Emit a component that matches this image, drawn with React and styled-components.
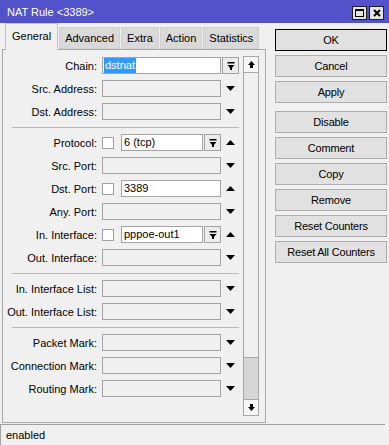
import React from 'react';
import styled, { createGlobalStyle } from 'styled-components';

const GlobalStyle = createGlobalStyle`
	html, body {
		margin: 0;
		padding: 0;
		background: #f0f0f0;
	}
	body {
		font-family: "Liberation Sans", Arial, sans-serif;
		font-size: 11px;
		color: #000;
	}
`;

const Window = styled.div`
	width: 389px;
	height: 445px;
	display: flex;
	flex-direction: column;
	background: #f0f0f0;
	overflow: hidden;
`;

const TitleBar = styled.div`
	height: 23px;
	flex: none;
	display: flex;
	align-items: center;
	justify-content: space-between;
	padding: 0 5px 0 7px;
	background: #5252cb;
	color: #fff;
	font-size: 11px;
	box-sizing: border-box;
`;

const TitleButtons = styled.div`
	display: flex;
	gap: 2px;
	margin-top: 2px;
`;

const TitleButton = styled.div`
	width: 15px;
	height: 14px;
	box-sizing: border-box;
	border: 1px solid #1e1e1e;
	background: #e4e4e4;
	display: flex;
	align-items: center;
	justify-content: center;
`;

const Body = styled.div`
	display: flex;
	flex: none;
	height: 400px;
`;

const LeftPane = styled.div`
	width: 266px;
	padding-left: 2px;
	box-sizing: border-box;
	display: flex;
	flex-direction: column;
`;

const TabStrip = styled.div`
	height: 26px;
	display: flex;
	align-items: flex-end;
	padding-left: 3px;
`;

const Tab = styled.div`
	position: relative;
	z-index: ${({ $active }) => ($active ? 1 : 0)};
	box-sizing: border-box;
	height: ${({ $active }) => ($active ? '27px' : '22px')};
	margin-bottom: ${({ $active }) => ($active ? '-1px' : '0')};
	margin-left: ${({ $active }) => ($active ? '0' : '1px')};
	padding: ${({ $active }) => ($active ? '0 6px 3px' : '0 5px')};
	display: flex;
	align-items: center;
	background: ${({ $active }) => ($active ? '#f0f0f0' : '#d9d9d9')};
	border: 1px solid ${({ $active }) => ($active ? '#c4c4c4' : '#d0d0d0')};
	border-bottom: ${({ $active }) => ($active ? 'none' : '1px solid #d0d0d0')};
	white-space: nowrap;
`;

const Panel = styled.div`
	width: 264px;
	height: 374px;
	box-sizing: border-box;
	border: 1px solid #a8a8a8;
	display: flex;
`;

const Rows = styled.div`
	width: 236px;
	padding-top: 4px;
	display: flex;
	flex-direction: column;
`;

const Section = styled.div`
	display: flex;
	flex-direction: column;
`;

const Divider = styled.div`
	height: 1px;
	width: 227px;
	margin: 4px 0 3px 9px;
	background: #b9b9b9;
`;

const Row = styled.div`
	height: 23px;
	display: flex;
	align-items: center;
`;

const Label = styled.div`
	width: 94px;
	margin-right: 5px;
	text-align: right;
	white-space: nowrap;
`;

const Controls = styled.div`
	width: 119px;
	display: flex;
	align-items: center;
`;

const CheckBox = styled.div`
	width: 12px;
	height: 12px;
	flex: none;
	box-sizing: border-box;
	border: 1px solid #a0a0a0;
	background: #fff;
	margin-right: 7px;
`;

const Field = styled.div`
	flex: 1;
	height: 17px;
	box-sizing: border-box;
	border: 1px solid #a3a3a3;
	background: ${({ $filled }) => ($filled ? '#fff' : '#f0f0f0')};
	padding: 0 2px;
	line-height: 15px;
	white-space: nowrap;
	overflow: hidden;
`;

const Selected = styled.span`
	display: inline-block;
	background: #3399ff;
	color: #fff;
	padding: 0 1px;
	margin-left: -1px;
	height: 15px;
`;

const DropButton = styled.div`
	width: 17px;
	height: 17px;
	flex: none;
	margin-left: 1px;
	box-sizing: border-box;
	border: 1px solid #a3a3a3;
	background: #ececec;
	display: flex;
	align-items: center;
	justify-content: center;
`;

const Slot = styled.div`
	width: 18px;
	height: 17px;
	display: flex;
	align-items: center;
	justify-content: center;
`;

const ScrollBar = styled.div`
	width: 16px;
	margin: 6px 0 6px 4px;
	box-sizing: border-box;
	border: 1px solid #a8a8a8;
	display: flex;
	flex-direction: column;
	background: #f0f0f0;
`;

const ScrollButton = styled.div`
	height: 15px;
	flex: none;
	display: flex;
	align-items: center;
	justify-content: center;
	border-${({ $edge }) => $edge}: 1px solid #a8a8a8;
	background: #f7f7f7;
`;

const Track = styled.div`
	flex: 1;
	display: flex;
	flex-direction: column;
	justify-content: flex-end;
`;

const Thumb = styled.div`
	height: 41px;
	background: #d6d6d6;
	border-top: 1px solid #a8a8a8;
`;

const ButtonColumn = styled.div`
	width: 112px;
	margin-left: 9px;
	padding-top: 6px;
	display: flex;
	flex-direction: column;
`;

const Button = styled.div`
	height: 22px;
	box-sizing: border-box;
	margin-top: ${({ $gap }) => $gap}px;
	border: 1px solid ${({ $primary }) => ($primary ? '#000' : '#adadad')};
	background: #e1e1e1;
	display: flex;
	align-items: center;
	justify-content: center;
	letter-spacing: -0.2px;
	white-space: nowrap;
`;

const StatusBar = styled.div`
	margin: 1px 4px 0 0;
	height: 21px;
	box-sizing: border-box;
	border-top: 1px solid #a0a0a0;
	border-left: 1px solid #a0a0a0;
	display: flex;
	align-items: center;
	padding-left: 5px;
`;

const DownTri = () => (
	<svg width="9" height="5" viewBox="0 0 9 5">
		<polygon points="0,0 9,0 4.5,5" fill="#000" />
	</svg>
);

const UpTri = () => (
	<svg width="9" height="5" viewBox="0 0 9 5">
		<polygon points="0,5 9,5 4.5,0" fill="#000" />
	</svg>
);

const DropIcon = () => (
	<svg width="8" height="8" viewBox="0 0 8 8">
		<rect x="0.5" y="0" width="7" height="1.5" fill="#000" />
		<polygon points="0.5,3 7.5,3 4,7" fill="#000" />
		<rect x="3" y="6" width="2" height="2" fill="#000" />
	</svg>
);

const ScrollArrow = ({ up }) => (
	<svg width="7" height="7" viewBox="0 0 7 7" style={{ transform: up ? 'none' : 'rotate(180deg)' }}>
		<polygon points="0,4 7,4 3.5,0" fill="#000" />
		<rect x="2" y="4" width="3" height="3" fill="#000" />
	</svg>
);

const sections = [
	[
		{ label: 'Chain:', value: 'dstnat', selected: true, slot: 'button' },
		{ label: 'Src. Address:' },
		{ label: 'Dst. Address:' },
	],
	[
		{ label: 'Protocol:', check: true, value: '6 (tcp)', drop: true, slot: 'up' },
		{ label: 'Src. Port:' },
		{ label: 'Dst. Port:', check: true, value: '3389', slot: 'up' },
		{ label: 'Any. Port:' },
		{ label: 'In. Interface:', check: true, value: 'pppoe-out1', drop: true, slot: 'up' },
		{ label: 'Out. Interface:' },
	],
	[{ label: 'In. Interface List:' }, { label: 'Out. Interface List:' }],
	[{ label: 'Packet Mark:' }, { label: 'Connection Mark:' }, { label: 'Routing Mark:' }],
];

const buttons = [
	{ text: 'OK', primary: true, gap: 0 },
	{ text: 'Cancel', gap: 4 },
	{ text: 'Apply', gap: 4 },
	{ text: 'Disable', gap: 8 },
	{ text: 'Comment', gap: 4 },
	{ text: 'Copy', gap: 4 },
	{ text: 'Remove', gap: 4 },
	{ text: 'Reset Counters', gap: 4 },
	{ text: 'Reset All Counters', gap: 4 },
];

const tabs = ['General', 'Advanced', 'Extra', 'Action', 'Statistics'];

const FieldRow = ({ row }) => (
	<Row>
		<Label>{row.label}</Label>
		<Controls>
			{row.check && <CheckBox />}
			<Field $filled={row.value != null}>
				{row.selected ? <Selected>{row.value}</Selected> : row.value}
			</Field>
			{row.drop && (
				<DropButton>
					<DropIcon />
				</DropButton>
			)}
		</Controls>
		<Slot>
			{row.slot === 'button' ? (
				<DropButton>
					<DropIcon />
				</DropButton>
			) : row.slot === 'up' ? (
				<UpTri />
			) : (
				<DownTri />
			)}
		</Slot>
	</Row>
);

const App = () => {
	return (
		<>
			<GlobalStyle />
			<Window>
				<TitleBar>
					<span>NAT Rule &lt;3389&gt;</span>
					<TitleButtons>
						<TitleButton>
							<svg width="9" height="8" viewBox="0 0 9 8">
								<rect x="0.5" y="0.5" width="8" height="7" fill="none" stroke="#000" />
								<rect x="0" y="0" width="9" height="2" fill="#000" />
							</svg>
						</TitleButton>
						<TitleButton>
							<svg width="8" height="8" viewBox="0 0 8 8">
								<path d="M1 1 L7 7 M7 1 L1 7" stroke="#000" strokeWidth="2" />
							</svg>
						</TitleButton>
					</TitleButtons>
				</TitleBar>
				<Body>
					<LeftPane>
						<TabStrip>
							{tabs.map((t, i) => (
								<Tab key={t} $active={i === 0}>
									{t}
								</Tab>
							))}
						</TabStrip>
						<Panel>
							<Rows>
								{sections.map((rows, i) => (
									<Section key={i}>
										{i > 0 && <Divider />}
										{rows.map((row) => (
											<FieldRow key={row.label} row={row} />
										))}
									</Section>
								))}
							</Rows>
							<ScrollBar>
								<ScrollButton $edge="bottom">
									<ScrollArrow up />
								</ScrollButton>
								<Track>
									<Thumb />
								</Track>
								<ScrollButton $edge="top">
									<ScrollArrow />
								</ScrollButton>
							</ScrollBar>
						</Panel>
					</LeftPane>
					<ButtonColumn>
						{buttons.map((b) => (
							<Button key={b.text} $primary={b.primary} $gap={b.gap}>
								{b.text}
							</Button>
						))}
					</ButtonColumn>
				</Body>
				<StatusBar>enabled</StatusBar>
			</Window>
		</>
	);
};

export default App;
